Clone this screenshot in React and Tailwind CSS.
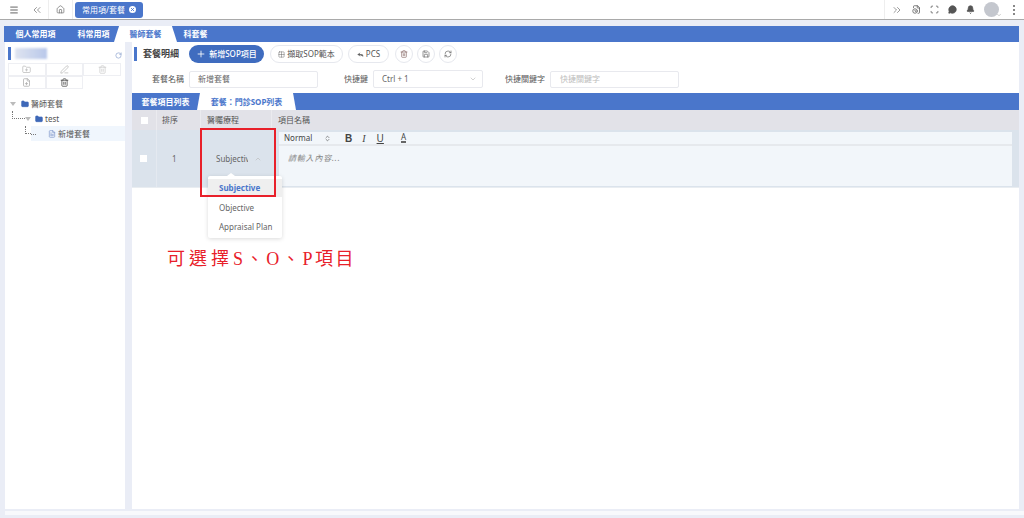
import React from "react";
import {
  ChevronDown,
  ChevronUp,
  ChevronsLeft,
  ChevronsRight,
  ChevronsUpDown,
  Bell,
  FileClock,
  FilePlus,
  FileText,
  Folder,
  FolderPlus,
  Grid2x2,
  Home,
  Menu,
  MessageCircleMore,
  PenLine,
  Plus,
  RefreshCw,
  Reply,
  RotateCw,
  Save,
  Scan,
  Trash2,
  X,
} from "lucide-react";

const font = { fontFamily: '"Noto Sans", "Noto Sans CJK TC", sans-serif' };

function Tool({ children, className = "" }) {
  return (
    <div className={`flex h-[13px] items-center justify-center border border-[#eeeff3] ${className}`}>
      {children}
    </div>
  );
}

function CircleBtn({ children }) {
  return (
    <button className="flex h-[18px] w-[18px] items-center justify-center rounded-full border border-[#e6e8ee] text-[#666]">
      {children}
    </button>
  );
}

export default function App() {
  return (
    <div style={font} className="relative flex h-[518px] w-[1024px] flex-col overflow-hidden bg-[#eaedf6] text-[8px] text-[#555]">
      {/* top bar */}
      <header className="flex h-[20px] shrink-0 items-center border-b border-[#a9a9a9] bg-white">
        <div className="flex w-[26px] justify-center pl-[1px] text-[#444]">
          <Menu size={10} />
        </div>
        <div className="flex w-[22px] justify-center text-[#555]">
          <ChevronsLeft size={12} strokeWidth={1.2} />
        </div>
        <div className="flex h-full w-[25px] items-center justify-center border-x border-[#eee] text-[#777]">
          <Home size={9} />
        </div>
        <div className="ml-[2px] flex h-[16px] w-[68px] items-center justify-center gap-[4px] rounded-[3px] bg-[#4a76cb] text-[8px] text-white">
          常用項/套餐
          <span className="flex h-[7px] w-[7px] items-center justify-center rounded-full bg-white text-[#4a76cb]">
            <X size={5} strokeWidth={4} />
          </span>
        </div>
        <div className="ml-auto flex h-full w-[140px] items-center border-l border-[#eee] pl-[6px] text-[#555]">
          <ChevronsRight size={12} strokeWidth={1.2} className="text-[#555]" />
          <FileClock size={9} className="ml-[9px]" />
          <Scan size={9} className="ml-[9px]" />
          <MessageCircleMore size={9} className="ml-[9px]" fill="#555" stroke="#555" />
          <Bell size={9} className="ml-[9px]" fill="#555" />
          <span className="ml-[9px] h-[15px] w-[15px] rounded-full bg-[#c4c7ce]" />
          <ChevronDown size={6} className="-ml-[3px] mt-[10px] text-[#999]" />
          <div className="ml-[11px] flex flex-col gap-[2px]">
            <span className="h-[2px] w-[2px] bg-[#888]" />
            <span className="h-[2px] w-[2px] bg-[#888]" />
            <span className="h-[2px] w-[2px] bg-[#888]" />
          </div>
        </div>
      </header>

      <div className="ml-[4px] mt-[6px] flex w-[1015px] flex-col">
        {/* main tabs */}
        <nav className="flex h-[16px] items-center bg-[#4a76cb] text-[8px] font-bold text-white">
          <span className="ml-[11px] w-[41px] text-center">個人常用項</span>
          <span className="ml-[21px] w-[33px] text-center">科常用項</span>
          <span className="ml-[4px] flex h-full w-[63px] items-center justify-center bg-white text-[#4a76cb] [clip-path:polygon(8%_0,92%_0,100%_100%,0_100%)]">
            醫師套餐
          </span>
          <span className="ml-[6px] w-[25px] text-center">科套餐</span>
        </nav>

        <div className="flex h-[467px] gap-[7px]">
          {/* left sidebar */}
          <aside className="ml-[1px] w-[120px] shrink-0 bg-white px-[3px] pt-[5px]">
            <div className="flex h-[13px] items-center">
              <span className="h-[13px] w-[3px] bg-[#4a76cb]" />
              <span className="ml-[4px] h-[11px] w-[32px] bg-gradient-to-r from-[#dfe4f0] to-[#b9c8ea] blur-[1px]" />
              <RotateCw size={7} className="ml-auto mt-[3px] text-[#7b94c8]" />
            </div>
            <div className="mt-[3px] grid w-[113px] grid-cols-3">
              <Tool><FolderPlus size={9} className="text-[#bbb]" /></Tool>
              <Tool><PenLine size={9} className="text-[#bbb]" /></Tool>
              <Tool><Trash2 size={9} className="text-[#ccc]" /></Tool>
              <Tool><FilePlus size={9} className="text-[#aaa]" /></Tool>
              <Tool><Trash2 size={9} className="text-[#444]" /></Tool>
            </div>
            <div className="mt-[7px] text-[8px] text-[#555]">
              <div className="flex h-[15px] items-center pl-[2px]">
                <span className="h-0 w-0 border-x-[3px] border-t-[4px] border-x-transparent border-t-[#bbb]" />
                <Folder size={8} className="ml-[5px] text-[#3e68b8]" fill="#3e68b8" />
                <span className="ml-[2px]">醫師套餐</span>
              </div>
              <div className="flex h-[15px] items-center pl-[4px]">
                <span className="-mt-[8px] h-[8px] w-[13px] border-b border-l border-dotted border-[#777]" />
                <span className="h-0 w-0 border-x-[3px] border-t-[4px] border-x-transparent border-t-[#bbb]" />
                <Folder size={8} className="ml-[4px] text-[#3e68b8]" fill="#3e68b8" />
                <span className="ml-[2px]">test</span>
              </div>
              <div className="flex h-[15px] items-center pl-[17px]">
                <span className="-mt-[7px] h-[8px] w-[6px] shrink-0 border-b border-l border-dotted border-[#777]" />
                <div className="-mr-[3px] flex h-full flex-1 items-center bg-[#f0f6fd]">
                  <span className="mt-[1px] w-[5px] border-b border-dotted border-[#777]" />
                  <FileText size={8} className="ml-[12px] text-[#7b94c8]" />
                  <span className="ml-[2px]">新增套餐</span>
                </div>
              </div>
            </div>
          </aside>

          {/* main panel */}
          <main className="flex w-[887px] flex-col bg-white">
            <div className="flex h-[21px] items-center pt-[3px] pl-[2px]">
              <span className="h-[14px] w-[3px] bg-[#4a76cb]" />
              <span className="ml-[6px] w-[36px] whitespace-nowrap text-[9px] font-bold text-[#444]">套餐明細</span>
              <button className="ml-[10px] flex h-[18px] w-[75px] items-center justify-center gap-[3px] rounded-full bg-[#3f6cbf] text-[8px] font-medium text-white">
                <Plus size={10} />
                新增SOP項目
              </button>
              <button className="ml-[6px] flex h-[18px] w-[73px] items-center justify-center gap-[2px] rounded-full border border-[#e6e8ee] text-[8px] text-[#555]">
                <Grid2x2 size={7} strokeWidth={1.5} />
                擷取SOP範本
              </button>
              <button className="ml-[5px] flex h-[18px] w-[41px] items-center justify-center gap-[2px] rounded-full border border-[#e6e8ee] text-[8px] text-[#555]">
                <Reply size={7} fill="#555" />
                PCS
              </button>
              <div className="ml-[6px] flex gap-[4px]">
                <CircleBtn><Trash2 size={8} className="text-[#8a6a66]" /></CircleBtn>
                <CircleBtn><Save size={8} /></CircleBtn>
                <CircleBtn><RefreshCw size={8} /></CircleBtn>
              </div>
            </div>

            <div className="mt-[7px] flex h-[18px] items-center">
              <span className="ml-[20px] w-[37px] text-[8px]">套餐名稱</span>
              <div className="flex h-[17px] w-[129px] items-center rounded-[2px] border border-[#e8e9ee] pl-[8px] text-[#666]">新增套餐</div>
              <span className="ml-[26px] w-[29px] text-[8px]">快捷鍵</span>
              <div className="flex h-[18px] w-[110px] items-center justify-between rounded-[2px] border border-[#e8e9ee] pl-[8px] pr-[5px] text-[#666]">
                Ctrl + 1
                <ChevronDown size={8} className="text-[#bbb]" />
              </div>
              <span className="ml-[22px] w-[45px] text-[8px]">快捷關鍵字</span>
              <div className="flex h-[17px] w-[129px] items-center rounded-[2px] border border-[#e8e9ee] pl-[9px] text-[#bbb]">快捷關鍵字</div>
            </div>

            {/* sub tabs */}
            <nav className="mt-[5px] flex h-[17px] items-center bg-[#4a76cb] text-[8px] font-bold text-white">
              <span className="w-[65px] pl-[2px] text-center">套餐項目列表</span>
              <span className="flex h-full w-[99px] items-center justify-center bg-white text-[#4a76cb] [clip-path:polygon(3%_0,97%_0,100%_100%,0_100%)]">
                套餐：門診SOP列表
              </span>
            </nav>

            {/* table head */}
            <div className="flex h-[20px] items-center bg-[#e2e2e8] text-[8px] text-[#555]">
              <div className="flex w-[24px] justify-center">
                <span className="h-[7px] w-[7px] bg-white" />
              </div>
              <div className="h-full w-[44px] border-l border-[#ebebef] pl-[5px] leading-[20px]">排序</div>
              <div className="h-full w-[71px] border-l border-[#ebebef] pl-[6px] leading-[20px]">醫囑療程</div>
              <div className="h-full border-l border-[#ebebef] pl-[6px] leading-[20px]">項目名稱</div>
            </div>

            {/* table row */}
            <div className="flex h-[57px] bg-[#dbe3ec] text-[8px]">
              <div className="flex w-[24px] items-center justify-center pr-[1px]">
                <span className="h-[7px] w-[7px] bg-white" />
              </div>
              <div className="flex w-[44px] items-center border-l border-[#e4e9f0] pl-[15px] text-[#666]">1</div>
              <div className="flex w-[71px] items-center border-l border-[#e4e9f0] pl-[15px] text-[#666]">
                <span className="w-[32px] overflow-hidden whitespace-nowrap text-[8px]">Subjective</span>
                <ChevronUp size={8} className="ml-[6px] text-[#bbb]" />
              </div>
              <div className="mb-[1px] ml-[8px] mt-[2px] flex w-[733px] flex-col bg-[#f2f6fa]">
                <div className="flex h-[14px] items-center border-b-2 border-[#e6e9ed] pl-[5px] text-[8px] text-[#444]">
                  <span className="w-[40px]">Normal</span>
                  <ChevronsUpDown size={7} />
                  <span className="ml-[14px] text-[10px] font-bold" style={{ fontFamily: '"Liberation Sans", sans-serif' }}>B</span>
                  <span className="ml-[10px] text-[10px] italic" style={{ fontFamily: '"Liberation Serif", serif' }}>I</span>
                  <span className="ml-[11px] text-[10px] underline">U</span>
                  <span className="ml-[17px] border-b-2 border-[#666] text-[8px] leading-[8px]">A</span>
                </div>
                <div className="pl-[9px] pt-[6px] text-[8px] italic tracking-[0.8px] text-[#888]">請輸入內容...</div>
              </div>
              <div className="ml-[1px] w-[6px]" />
            </div>
            <div className="h-[1px] bg-[#e9edf1]" />
          </main>
        </div>
      </div>

      <div className="ml-[5px] mt-[2px] h-[4px] w-[1019px] bg-[#f8f9fc]" />

      {/* dropdown menu */}
      <div className="absolute left-[208px] top-[176px] w-[74px] rounded-[2px] bg-white pb-[2px] pt-[3px] text-[8px] text-[#666] shadow-[0_1px_4px_rgba(0,0,0,0.15)]">
        <span className="absolute -top-[3px] left-[19px] h-0 w-0 border-x-[4px] border-b-[3px] border-x-transparent border-b-white" />
        <div className="flex h-[18px] items-center bg-[#efefef] pl-[11px] font-bold text-[#4a76cb]">Subjective</div>
        <div className="flex h-[20px] items-center pl-[11px] pt-[1px]">Objective</div>
        <div className="flex h-[19px] items-center pl-[11px]">Appraisal Plan</div>
      </div>

      {/* annotation */}
      <div className="absolute left-[200px] top-[128px] h-[69px] w-[76px] border-2 border-[#e8202a]" />
      <div
        className="absolute left-[167px] top-[245px] whitespace-nowrap text-[18px] leading-[28px] tracking-[2.6px] text-[#e8202a]"
        style={{ fontFamily: '"Liberation Serif", "Noto Sans CJK TC", serif' }}
      >
        <span className="tracking-[4px]">可選擇</span>S、O、P項目
      </div>
    </div>
  );
}
